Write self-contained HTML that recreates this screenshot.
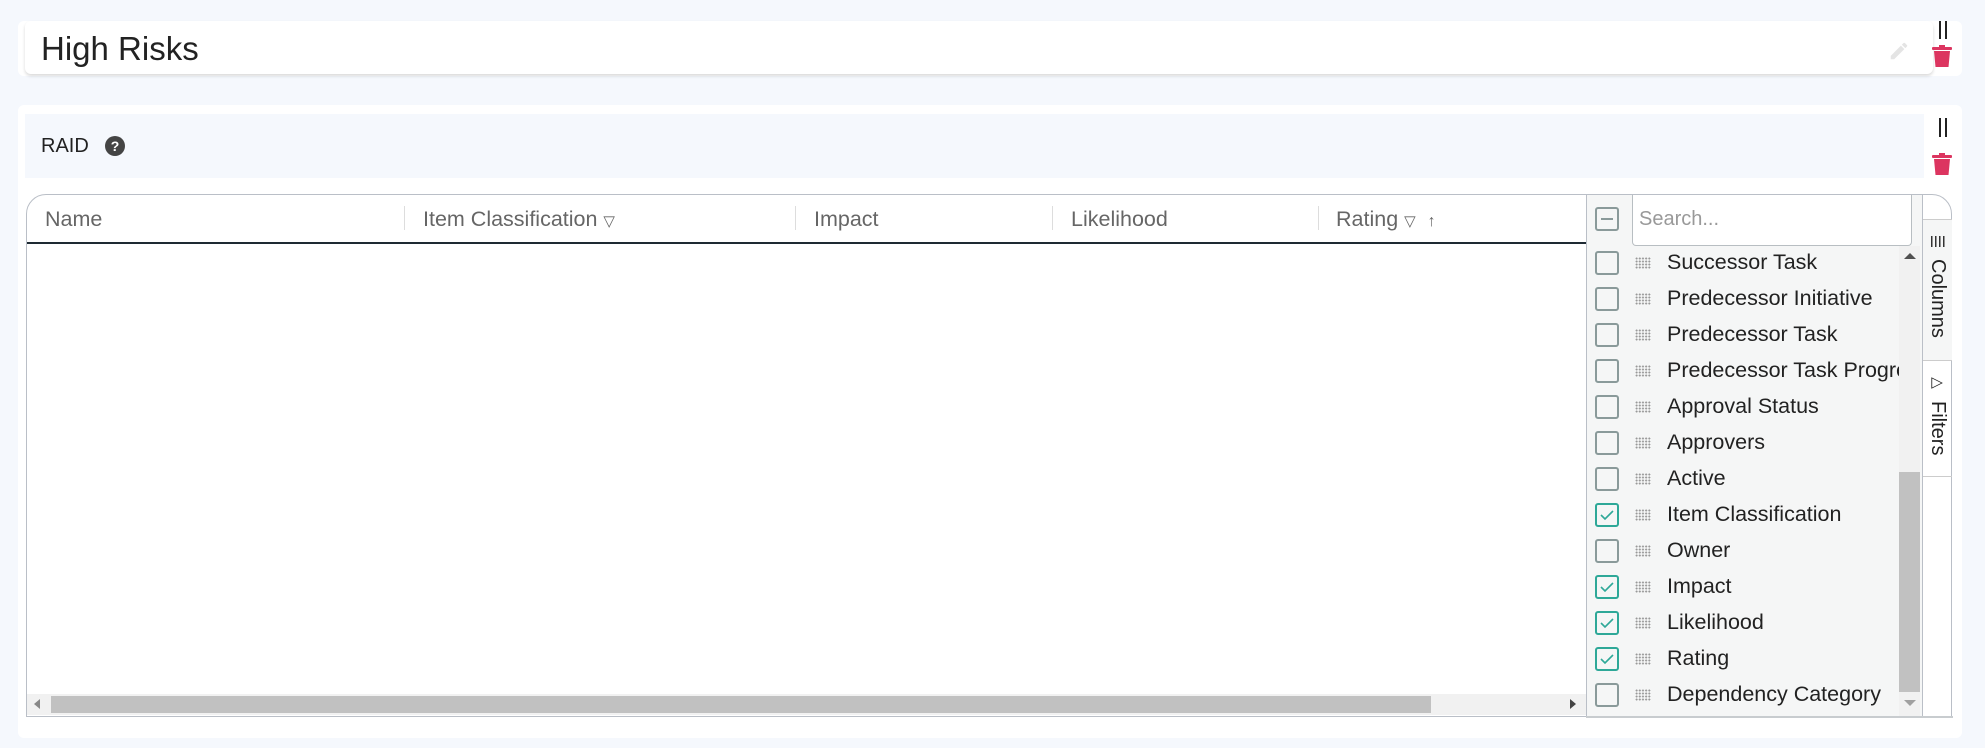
<!DOCTYPE html><html><head><style>
body{margin:0;width:1985px;height:748px;background:#f5f8fd;font-family:"Liberation Sans",sans-serif;position:relative;overflow:hidden}
.a{position:absolute}
.cb{position:absolute;width:20px;height:20px;border:2px solid #8a9a9a;border-radius:3px;box-sizing:content-box}
.ck{border-color:#2ea898}
.grip{position:absolute;width:16px;height:12px;background-image:radial-gradient(#999 0.9px,transparent 1.1px);background-size:3.2px 3px}
.lab{position:absolute;font-size:21.5px;color:#222;white-space:nowrap}
.h{position:absolute;top:207px;font-size:21.5px;color:#666;white-space:nowrap}
.sep{position:absolute;top:206px;width:1px;height:24px;background:#ddd}
</style></head><body>
<div class="a" style="left:18px;top:21px;width:1944px;height:55px;background:#fff;border-radius:6px"></div>
<div class="a" style="left:25px;top:21px;width:1908px;height:53px;background:#fff;border-radius:6px;box-shadow:0 2px 3px rgba(0,0,0,.15)"></div>
<div class="a" style="left:41px;top:30px;font-size:33px;color:#222">High Risks</div>
<svg class="a" style="left:1888px;top:40px" width="22" height="22" viewBox="0 0 24 24"><path d="M3 17.25V21h3.75L17.8 9.94l-3.75-3.75L3 17.25zM20.7 7.04a1 1 0 000-1.41l-2.34-2.34a1 1 0 00-1.41 0l-1.83 1.83 3.75 3.75 1.83-1.83z" fill="#e4e4e4"/></svg>
<div class="a" style="left:1939px;top:21px;width:2px;height:18px;background:#222"></div><div class="a" style="left:1945px;top:21px;width:2px;height:18px;background:#222"></div>
<svg class="a" style="left:1932px;top:45px" width="20" height="23" viewBox="0 0 20 23"><rect x="0" y="2" width="20" height="3" rx="1" fill="#dc3560"/><rect x="7" y="0" width="6" height="3" fill="#dc3560"/><path d="M2 6h16l-1.5 16h-13z" fill="#dc3560"/></svg>

<div class="a" style="left:18px;top:105px;width:1944px;height:633px;background:#fff;border-radius:6px"></div>
<div class="a" style="left:25px;top:114px;width:1899px;height:64px;background:#f5f8fd"></div>
<div class="a" style="left:41px;top:135px;font-size:20px;color:#222">RAID</div>
<div class="a" style="left:105px;top:136px;width:20px;height:20px;border-radius:50%;background:#444;color:#fff;font-size:14px;font-weight:bold;text-align:center;line-height:20px">?</div>
<div class="a" style="left:1939px;top:118px;width:2px;height:19px;background:#222"></div><div class="a" style="left:1945px;top:118px;width:2px;height:19px;background:#222"></div>
<svg class="a" style="left:1932px;top:153px" width="20" height="23" viewBox="0 0 20 23"><rect x="0" y="2" width="20" height="3" rx="1" fill="#dc3560"/><rect x="7" y="0" width="6" height="3" fill="#dc3560"/><path d="M2 6h16l-1.5 16h-13z" fill="#dc3560"/></svg>

<div class="a" style="left:26px;top:194px;width:1926px;height:523px;border:1px solid #babfc7;border-radius:20px 20px 0 0;box-sizing:border-box;background:#fff"></div>
<div class="a" style="left:27px;top:242px;width:1559px;height:2px;background:#1e2a33"></div>
<div class="h" style="left:45px">Name</div>
<div class="sep" style="left:404px"></div><div class="h" style="left:423px">Item Classification <span style="font-size:15px">▽</span></div>
<div class="sep" style="left:795px"></div><div class="h" style="left:814px">Impact</div>
<div class="sep" style="left:1052px"></div><div class="h" style="left:1071px">Likelihood</div>
<div class="sep" style="left:1318px"></div><div class="h" style="left:1336px">Rating <span style="font-size:15px">▽</span> &nbsp;<span style="font-size:16px">↑</span></div>
<div class="a" style="left:27px;top:694px;width:1559px;height:21px;background:#f1f1f1"></div>
<div class="a" style="left:51px;top:696px;width:1380px;height:17px;background:#c1c1c1"></div>
<div class="a" style="left:34px;top:699px;width:0;height:0;border:5px solid transparent;border-right:6px solid #888;border-left:0"></div>
<div class="a" style="left:1570px;top:699px;width:0;height:0;border:5px solid transparent;border-left:6px solid #444;border-right:0"></div>
<div class="a" style="left:1586px;top:195px;width:337px;height:521px;background:#f5f6f6;border-left:1px solid #babfc7;border-right:1px solid #babfc7;box-sizing:border-box"></div>
<div class="a" style="left:1586px;top:716px;width:367px;height:2px;background:#c8cccf"></div>
<div class="cb" style="left:1595px;top:207px"><div style="position:absolute;left:4px;top:9px;width:12px;height:2px;background:#8a9a9a"></div></div>
<div class="a" style="left:1632px;top:195px;width:280px;height:51px;background:#fff;border:1px solid #b8bec2;border-top:none;border-radius:0 0 4px 4px;box-sizing:border-box"></div>
<div class="a" style="left:1639px;top:208px;font-size:20px;color:#999">Search...</div>
<div class="a" style="left:1899px;top:246px;width:21px;height:470px;background:#f1f1f1"></div>
<div class="a" style="left:1899px;top:472px;width:21px;height:220px;background:#c1c1c1"></div>
<div class="a" style="left:1904px;top:253px;width:0;height:0;border:6px solid transparent;border-bottom:6px solid #505050;border-top:0"></div>
<div class="a" style="left:1904px;top:700px;width:0;height:0;border:6px solid transparent;border-top:6px solid #a0a0a0;border-bottom:0"></div>
<div class="a" style="left:1586px;top:246px;width:313px;height:470px;overflow:hidden">
<div style="position:relative">
<div class="cb" style="left:9px;top:5px"></div><div class="grip" style="left:49px;top:11px"></div><div class="lab" style="left:81px;top:4px">Successor Task</div>
<div class="cb" style="left:9px;top:41px"></div><div class="grip" style="left:49px;top:47px"></div><div class="lab" style="left:81px;top:40px">Predecessor Initiative</div>
<div class="cb" style="left:9px;top:77px"></div><div class="grip" style="left:49px;top:83px"></div><div class="lab" style="left:81px;top:76px">Predecessor Task</div>
<div class="cb" style="left:9px;top:113px"></div><div class="grip" style="left:49px;top:119px"></div><div class="lab" style="left:81px;top:112px">Predecessor Task Progress</div>
<div class="cb" style="left:9px;top:149px"></div><div class="grip" style="left:49px;top:155px"></div><div class="lab" style="left:81px;top:148px">Approval Status</div>
<div class="cb" style="left:9px;top:185px"></div><div class="grip" style="left:49px;top:191px"></div><div class="lab" style="left:81px;top:184px">Approvers</div>
<div class="cb" style="left:9px;top:221px"></div><div class="grip" style="left:49px;top:227px"></div><div class="lab" style="left:81px;top:220px">Active</div>
<div class="cb ck" style="left:9px;top:257px"><svg width="20" height="20"><path d="M4 10l4 4 8-8" stroke="#2ea898" stroke-width="1.6" fill="none"/></svg></div><div class="grip" style="left:49px;top:263px"></div><div class="lab" style="left:81px;top:256px">Item Classification</div>
<div class="cb" style="left:9px;top:293px"></div><div class="grip" style="left:49px;top:299px"></div><div class="lab" style="left:81px;top:292px">Owner</div>
<div class="cb ck" style="left:9px;top:329px"><svg width="20" height="20"><path d="M4 10l4 4 8-8" stroke="#2ea898" stroke-width="1.6" fill="none"/></svg></div><div class="grip" style="left:49px;top:335px"></div><div class="lab" style="left:81px;top:328px">Impact</div>
<div class="cb ck" style="left:9px;top:365px"><svg width="20" height="20"><path d="M4 10l4 4 8-8" stroke="#2ea898" stroke-width="1.6" fill="none"/></svg></div><div class="grip" style="left:49px;top:371px"></div><div class="lab" style="left:81px;top:364px">Likelihood</div>
<div class="cb ck" style="left:9px;top:401px"><svg width="20" height="20"><path d="M4 10l4 4 8-8" stroke="#2ea898" stroke-width="1.6" fill="none"/></svg></div><div class="grip" style="left:49px;top:407px"></div><div class="lab" style="left:81px;top:400px">Rating</div>
<div class="cb" style="left:9px;top:437px"></div><div class="grip" style="left:49px;top:443px"></div><div class="lab" style="left:81px;top:436px">Dependency Category</div>
</div></div>
<div class="a" style="left:1923px;top:219px;width:29px;height:142px;background:#f5f6f6;border-top:1px solid #ccc;border-bottom:1px solid #ccc;box-sizing:border-box"></div>
<div class="a" style="left:1923px;top:476px;width:29px;height:1px;background:#ccc"></div>
<div class="a" style="left:1931px;top:236px;width:14px;height:11px;background:repeating-linear-gradient(90deg,#333 0 1.5px,transparent 1.5px 4px)"></div>
<div class="a" style="left:1926px;top:259px;writing-mode:vertical-rl;font-size:20px;color:#222">Columns</div>
<div class="a" style="left:1930px;top:374px;font-size:15px;color:#222;transform:rotate(-90deg)">▽</div>
<div class="a" style="left:1926px;top:401px;writing-mode:vertical-rl;font-size:20px;color:#222">Filters</div>
</body></html>
